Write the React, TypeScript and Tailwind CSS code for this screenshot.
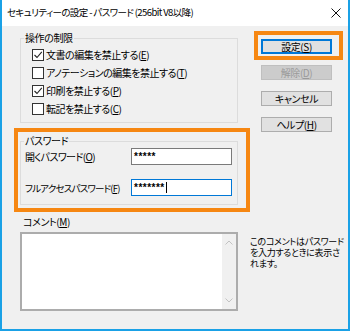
import React from "react";

const jp = "font-['Noto_Sans_CJK_JP','Noto_Sans',sans-serif] [font-feature-settings:'palt']";

function Key({ k }: { k: string }) {
  return (
    <>
      (<span className="underline underline-offset-1">{k}</span>)
    </>
  );
}

function Check({ checked, children }: { checked?: boolean; children: React.ReactNode }) {
  return (
    <div className="flex h-[18px] items-center gap-[2px]">
      <div className="flex h-[12px] w-[12px] items-center justify-center border border-[#333333] bg-white">
        {checked && (
          <svg width="10" height="10" viewBox="0 0 10 10">
            <path d="M1.5 5 L4 7.5 L8.8 1.8" fill="none" stroke="#222" strokeWidth="1.1" />
          </svg>
        )}
      </div>
      <span className="whitespace-nowrap text-[10px] leading-[14px] tracking-[-0.5px] text-black">{children}</span>
    </div>
  );
}

function Btn({
  children,
  primary,
  disabled,
}: {
  children: React.ReactNode;
  primary?: boolean;
  disabled?: boolean;
}) {
  let cls = "border border-[#adadad] bg-[#e1e1e1] text-black";
  if (primary) cls = "border-2 border-[#0078d7] bg-[#e1e1e1] text-black";
  if (disabled) cls = "border border-[#bfbfbf] bg-[#cccccc] text-[#9a9a9a]";
  return (
    <div className={`flex h-[15px] w-[71px] items-center justify-center whitespace-nowrap text-[10px] leading-none ${cls}`}>
      {children}
    </div>
  );
}

export default function App() {
  return (
    <div
      className={`flex h-[331px] w-[350px] flex-col overflow-hidden border-x-2 border-b-2 border-[#1aa1e6] bg-[#f0f0f0] tracking-[-0.4px] ${jp}`}
    >
      {/* title bar */}
      <div className="flex h-[26px] shrink-0 items-center justify-between bg-white pl-[5px] pr-[7px]">
        <span className="whitespace-nowrap text-[9.5px] leading-none tracking-[-0.6px] text-black">
          セキュリティーの設定 - パスワード (256bit V8以降)
        </span>
        <svg width="10" height="10" viewBox="0 0 10 10">
          <path d="M0.5 0.5 L9.5 9.5 M9.5 0.5 L0.5 9.5" stroke="#111" strokeWidth="1" />
        </svg>
      </div>

      <div className="flex flex-1 flex-col pl-[18px]">
        <div className="flex">
          {/* left groups */}
          <div className="mt-[12px] flex w-[218px] flex-col">
            <div className="relative h-[85px] border border-[#dcdcdc] pl-[11px] pt-[7px]">
              <span className="absolute -top-[8px] left-[3px] bg-[#f0f0f0] px-[1px] text-[10px] leading-[14px]">
                操作の制限
              </span>
              <Check checked>
                文書の編集を禁止する<Key k="E" />
              </Check>
              <Check>
                アノテーションの編集を禁止する<Key k="T" />
              </Check>
              <Check checked>
                印刷を禁止する<Key k="P" />
              </Check>
              <Check>
                転記を禁止する<Key k="C" />
              </Check>
            </div>

            <div className="relative mt-[18px] h-[64px] border border-[#dcdcdc] pl-[4px] pt-[6px]">
              <span className="absolute -top-[8px] left-[3px] bg-[#f0f0f0] px-[1px] text-[10px] leading-[14px]">
                パスワード
              </span>
              <div className="flex items-center">
                <span className="w-[106px] whitespace-nowrap text-[10px] leading-[14px] tracking-[-0.6px]">
                  開くパスワード<Key k="O" />
                </span>
                <div className="flex h-[17px] w-[101px] items-center border border-[#7a7a7a] bg-white pl-[2px] font-['Liberation_Sans',sans-serif] text-[10px] font-bold tracking-[0.5px]">
                  *****
                </div>
              </div>
              <div className="mt-[14px] flex items-center">
                <span className="w-[106px] whitespace-nowrap text-[9.5px] leading-[14px] tracking-[-0.8px]">
                  フルアクセスパスワード<Key k="F" />
                </span>
                <div className="flex h-[17px] w-[101px] items-center border border-[#0078d7] bg-white pl-[2px] font-['Liberation_Sans',sans-serif] text-[10px] font-bold tracking-[0.5px]">
                  *******
                  <span className="ml-[1px] h-[11px] w-[1px] bg-black" />
                </div>
              </div>
              <div className="pointer-events-none absolute -bottom-[8px] -left-[7px] -right-[13px] -top-[14px] border-4 border-[#f68712]" />
            </div>
          </div>

          {/* right buttons */}
          <div className="ml-[23px] mt-[13px] flex flex-col gap-[11px]">
            <div className="relative">
              <Btn primary>
                設定<Key k="S" />
              </Btn>
              <div className="pointer-events-none absolute -bottom-[6px] -left-[7px] -right-[11px] -top-[8px] border-4 border-[#f68712]" />
            </div>
            <Btn disabled>
              解除<Key k="D" />
            </Btn>
            <Btn>キャンセル</Btn>
            <Btn>
              ヘルプ<Key k="H" />
            </Btn>
          </div>
        </div>

        {/* comment */}
        <div className="mt-[10px] pl-[3px] text-[10px] leading-[14px]">
          コメント<Key k="M" />
        </div>
        <div className="mt-[3px] flex">
          <div className="flex h-[79px] w-[218px] justify-end border-2 border-[#acacac] bg-white">
            <div className="flex w-[14px] flex-col items-center justify-between bg-[#f0f0f0] py-[6px]">
              <svg width="8" height="5" viewBox="0 0 8 5">
                <path d="M0.5 4.5 L4 1 L7.5 4.5" fill="none" stroke="#c2c2c2" strokeWidth="1" />
              </svg>
              <svg width="8" height="5" viewBox="0 0 8 5">
                <path d="M0.5 0.5 L4 4 L7.5 0.5" fill="none" stroke="#c2c2c2" strokeWidth="1" />
              </svg>
            </div>
          </div>
          <div className="ml-[12px] mt-[4px] whitespace-nowrap text-[9px] leading-[11px] tracking-[-0.3px] text-black">
            このコメントはパスワード
            <br />
            を入力するときに表示さ
            <br />
            れます。
          </div>
        </div>
      </div>
    </div>
  );
}
